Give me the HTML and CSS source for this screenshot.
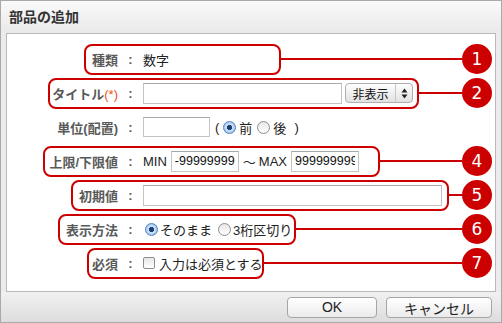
FILE: index.html
```html
<!DOCTYPE html>
<html lang="ja">
<head>
  <meta charset="UTF-8" />
  <title>部品の追加</title>
  <link rel="stylesheet" href="styles.css">
</head>
<body>

<div class="dialog">
  <div class="titlebar">部品の追加</div>

  <div class="panel">
    <!-- 1: kind -->
    <div class="row">
      <div class="note r1">
        <span class="label">種類</span><span class="colon">:</span>
        <span class="value">数字</span>
      </div>
      <div class="line"></div>
      <div class="badge">1</div>
    </div>

    <!-- 2: title -->
    <div class="row">
      <div class="note r2">
        <span class="label">タイトル<em class="req">(*)</em></span><span class="colon">:</span>
        <input type="text" class="field title-field">
        <span class="select">
          <span class="select-text">非表示</span>
          <span class="select-arrows">
            <svg width="7" height="11" viewBox="0 0 7 11"><path d="M3.5 0.5 L6.5 4.5 L0.5 4.5 Z M3.5 10.5 L6.5 6.5 L0.5 6.5 Z" fill="#222"/></svg>
          </span>
        </span>
      </div>
      <div class="line"></div>
      <div class="badge">2</div>
    </div>

    <!-- unit, no mark -->
    <div class="row">
      <div class="note bare r3">
        <span class="label">単位(配置)</span><span class="colon">:</span>
        <input type="text" class="field unit-field">
        <span class="paren">(</span>
        <span class="radio on"></span><span class="opt">前</span>
        <span class="radio"></span><span class="opt">後</span>
        <span class="paren close">)</span>
      </div>
    </div>

    <!-- 4: range -->
    <div class="row">
      <div class="note r4">
        <span class="label">上限/下限値</span><span class="colon">:</span>
        <span class="word">MIN</span>
        <input type="text" class="field num-field" value="-99999999">
        <span class="wave">〜</span>
        <span class="word">MAX</span>
        <input type="text" class="field num-field" value="999999999">
      </div>
      <div class="line"></div>
      <div class="badge">4</div>
    </div>

    <!-- 5: default -->
    <div class="row">
      <div class="note r5">
        <span class="label">初期値</span><span class="colon">:</span>
        <input type="text" class="field init-field">
      </div>
      <div class="line"></div>
      <div class="badge">5</div>
    </div>

    <!-- 6: display -->
    <div class="row">
      <div class="note r6">
        <span class="label">表示方法</span><span class="colon">:</span>
        <span class="radio on"></span><span class="opt">そのまま</span>
        <span class="radio"></span><span class="opt">3桁区切り</span>
      </div>
      <div class="line"></div>
      <div class="badge">6</div>
    </div>

    <!-- 7: required -->
    <div class="row">
      <div class="note r7">
        <span class="label">必須</span><span class="colon">:</span>
        <span class="check"></span><span class="opt">入力は必須とする</span>
      </div>
      <div class="line"></div>
      <div class="badge">7</div>
    </div>
  </div>

  <div class="footer">
    <button class="btn ok">OK</button>
    <button class="btn">キャンセル</button>
  </div>
</div>

</body>
</html>
```

FILE: styles.css
```css
body {
  margin: 0;
  padding: 0;
  background: #fff;
  font-family: "Liberation Sans", "Noto Sans CJK JP", sans-serif;
  font-size: 13px;
  color: #222;
}
.dialog {
  width: 502px;
  height: 323px;
  box-sizing: border-box;
  border: 1px solid #a9a9a9;
  background: #ececec;
  display: flex;
  flex-direction: column;
}
.titlebar {
  height: 32px;
  line-height: 32px;
  padding-left: 8px;
  font-size: 14px;
  font-weight: bold;
  color: #333;
  background: linear-gradient(#fafafa, #e9e9e9);
}
.panel {
  height: 259px;
  box-sizing: border-box;
  margin: 0 5px;
  padding: 8px 1px 0 0;
  background: #fff;
  border: 1px solid #b9b9b9;
}
.row {
  height: 34px;
  display: flex;
  align-items: center;
}
.note {
  height: 31px;
  box-sizing: border-box;
  border: 2px solid #cc0000;
  border-radius: 8px;
  display: flex;
  align-items: center;
  flex: none;
  white-space: nowrap;
}
.note > span {
  flex: none;
}
.note.bare {
  border-color: transparent;
}
.label {
  text-align: right;
  font-weight: bold;
  color: #5a5a5a;
}
.req {
  font-style: normal;
  font-weight: normal;
  color: #e8541c;
}
.colon {
  width: 25px;
  text-align: center;
  font-weight: bold;
  color: #5a5a5a;
}
.value {
  color: #222;
}

/* each mark box, hand placed around its row */
.r1 { margin-left: 77px; width: 197px; }
.r1 .label { width: 32px; }
.r2 { margin-left: 41px; width: 371px; }
.r2 .label { width: 68px; }
.r3 { margin-left: 45px; }
.r3 .label { width: 64px; }
.r4 { margin-left: 36px; width: 337px; }
.r4 .label { width: 73px; }
.r5 { margin-left: 64px; width: 378px; }
.r5 .label { width: 45px; }
.r6 { margin-left: 51px; width: 238px; }
.r6 .label { width: 58px; }
.r7 { margin-left: 80px; width: 177px; }
.r7 .label { width: 29px; }

.line {
  flex: 1;
  height: 2px;
  background: #cc0000;
}
.badge {
  width: 30px;
  height: 30px;
  border-radius: 50%;
  background: #cc0000;
  color: #fff;
  font-family: "DejaVu Sans", sans-serif;
  font-size: 17px;
  line-height: 30px;
  text-align: center;
  margin-right: 2px;
  flex: none;
}

.field {
  height: 21px;
  box-sizing: border-box;
  border: 1px solid #c4c4c4;
  border-top-color: #a8a8a8;
  padding: 0 3px;
  margin: 0;
  font-family: "Liberation Sans", sans-serif;
  font-size: 12.5px;
  color: #111;
  background: #fff;
  outline: none;
  flex: none;
}
.title-field { width: 199px; }
.unit-field { width: 67px; height: 20px; }
.num-field { width: 68px; }
.init-field { width: 299px; }

.select {
  display: flex;
  align-items: center;
  height: 20px;
  width: 68px;
  box-sizing: border-box;
  margin-left: 3px;
  border: 1px solid #b0b0b0;
  border-radius: 4px;
  background: linear-gradient(#fefefe, #e2e2e2);
}
.select-text {
  flex: 1;
  text-align: center;
  font-size: 12px;
  color: #111;
}
.select-arrows {
  width: 16px;
  height: 100%;
  border-left: 1px solid #c8c8c8;
  display: flex;
  align-items: center;
  justify-content: center;
}

.paren {
  margin-left: 5px;
  margin-right: 2px;
}
.paren.close {
  margin-left: 5px;
}
.radio {
  width: 11px;
  height: 11px;
  border-radius: 50%;
  border: 1px solid #8d8d8d;
  background: linear-gradient(#e6e6e6, #fff);
  margin-left: 2px;
  margin-right: 3px;
}
.radio.on {
  border-color: #4f82c4;
  background: radial-gradient(circle, #1d3f73 0, #1d3f73 2.3px, #cfe3f8 2.9px, #7fb0ea 100%);
}
.opt {
  margin-right: 3px;
}
.r6 .opt {
  margin-right: 4px;
}
.r6 .radio {
  margin-right: 2px;
}
.check {
  width: 10px;
  height: 10px;
  border: 1px solid #8d8d8d;
  border-radius: 2px;
  background: linear-gradient(#e6e6e6, #fff);
  margin-right: 4px;
}
.word {
  margin-right: 4px;
}
.wave {
  margin: 0 3px 0 4px;
}

.footer {
  flex: 1;
  display: flex;
  justify-content: flex-end;
  align-items: center;
  gap: 9px;
  padding-right: 9px;
  background: linear-gradient(#f1f1f1, #dddddd);
}
.btn {
  height: 21px;
  padding: 0;
  border: 1px solid #a5a5a5;
  border-radius: 4px;
  background: linear-gradient(#ffffff, #ebebeb);
  font-family: "Liberation Sans", "Noto Sans CJK JP", sans-serif;
  font-size: 14px;
  color: #222;
  width: 106px;
}
.btn.ok {
  width: 90px;
}
```
